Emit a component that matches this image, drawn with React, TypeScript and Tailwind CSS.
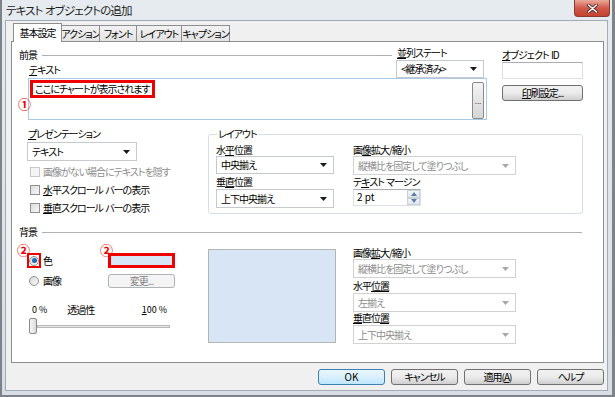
import React from "react";

function Arrow({ disabled }: { disabled?: boolean }) {
  return (
    <svg width="7" height="4" viewBox="0 0 7 4">
      <path d="M0 0h7L3.5 4z" fill={disabled ? "#a8a8a8" : "#1a1a1a"} />
    </svg>
  );
}

function Combo({ text, className = "", disabled }: { text: string; className?: string; disabled?: boolean }) {
  return (
    <div
      className={`flex items-center justify-between border bg-white pl-[4px] pr-[6px] ${
        disabled ? "border-[#d2d2d2] text-[#8d8d8d]" : "border-[#c5cad0] text-black"
      } ${className}`}
    >
      <span>{text}</span>
      <Arrow disabled={disabled} />
    </div>
  );
}

function U({ children }: { children: React.ReactNode }) {
  return <span className="underline underline-offset-[1px]">{children}</span>;
}

// a space that keeps its width despite the tight tracking
function Sp() {
  return <span className="tracking-normal"> </span>;
}

function Check({ children, disabled }: { children: React.ReactNode; disabled?: boolean }) {
  return (
    <div className={`flex h-[18px] items-center pl-[2px] ${disabled ? "text-[#8d8d8d]" : "text-black"}`}>
      <div
        className={`mr-[3px] h-[10px] w-[10px] border ${
          disabled ? "border-[#c8c8c8] bg-[#f4f4f4]" : "border-[#8f8f8f] bg-gradient-to-br from-[#dcdcdc] to-[#f7f7f7]"
        }`}
      />
      <span>{children}</span>
    </div>
  );
}

function Btn({ children, className = "", disabled, def }: { children: React.ReactNode; className?: string; disabled?: boolean; def?: boolean }) {
  return (
    <div
      className={`flex items-center justify-center rounded-[3px] border ${
        disabled
          ? "border-[#adb2b5] bg-[#f4f4f4] text-[#838383]"
          : def
          ? "border-[#3c7fb1] bg-gradient-to-b from-[#eaf6fd] via-[#d9f0fc] to-[#bee6fd] text-black"
          : "border-[#707070] bg-gradient-to-b from-[#f2f2f2] via-[#ebebeb] to-[#cfcfcf] text-black"
      } ${className}`}
    >
      {children}
    </div>
  );
}

function Radio({ on }: { on?: boolean }) {
  return (
    <div className="flex h-[10px] w-[10px] items-center justify-center rounded-full border border-[#8f8f8f] bg-gradient-to-br from-[#d8d8d8] to-[#f8f8f8]">
      {on && <div className="h-[5px] w-[5px] rounded-full bg-[#1d6bb8]" />}
    </div>
  );
}

function Mark({ n, className }: { n: string; className: string }) {
  return <span className={`absolute text-[13px] font-bold leading-none tracking-normal text-[#ee0000] ${className}`}>{n}</span>;
}

export default function App() {
  return (
    <div className="flex h-[397px] w-[615px] flex-col overflow-hidden whitespace-nowrap border-b-[2px] border-l-[2px] border-r-[3px] border-[#7e8389] bg-gradient-to-b from-[#e6ebf0] to-[#d8dee5] pb-[4px] pl-[3px] pr-[4px] font-['Noto_Sans_CJK_JP','Noto_Sans',sans-serif] text-[10px] leading-[12px] tracking-[-1px] text-black [font-feature-settings:'palt']">
      {/* title bar */}
      <div className="flex h-[20px] shrink-0 items-start">
        <span className="mt-[4px] pl-[1px] text-[11.5px] leading-[13px] tracking-[-0.9px] text-[#1e1e1e]">
          テキスト<Sp />オブジェクトの追加
        </span>
        <div className="flex-1" />
        <div className="-mr-[2px] flex h-[17px] w-[36px] items-center justify-center rounded-b-[4px] border border-t-0 border-[#8a3a32] bg-gradient-to-b from-[#e9a99a] via-[#d0594a] to-[#c4422f]">
          <svg width="11" height="9" viewBox="0 0 11 9">
            <path d="M1.5 1l8 7M9.5 1l-8 7" stroke="#3a2020" strokeWidth="3" strokeLinecap="round" />
            <path d="M1.5 1l8 7M9.5 1l-8 7" stroke="#ffffff" strokeWidth="1.6" strokeLinecap="round" />
          </svg>
        </div>
      </div>

      {/* client */}
      <div className="flex flex-1 flex-col border border-[#a3acb6] bg-[#f0f0f0] pl-[5px] pr-[2px] pt-[2px]">
        {/* tabs */}
        <div className="flex h-[18px] items-end pl-[2px]">
          <div className="relative z-10 -mb-[1px] flex h-[19px] w-[49px] items-center justify-center border border-b-0 border-[#8c8e94] bg-white">基本設定</div>
          {[
            ["アクション", "w-[39px]"],
            ["フォント", "w-[38px]"],
            ["レイアウト", "w-[46px]"],
            ["キャプション", "w-[49px]"],
          ].map(([t, w]) => (
            <div
              key={t}
              className={`-ml-[1px] flex h-[16px] items-center justify-center border border-b-0 border-[#8c8e94] bg-gradient-to-b from-[#f2f2f2] to-[#e3e3e3] ${w}`}
            >
              {t}
            </div>
          ))}
        </div>

        {/* panel */}
        <div className="flex h-[322px] w-[593px] flex-col border border-[#8c8e94] bg-white pl-[6px] pr-[20px] pt-[5px]">
          {/* 前景 */}
          <div className="flex items-start">
            <div className="flex w-[469px] flex-col">
              <div className="flex h-[31px]">
                <div className="flex flex-1 flex-col">
                  <div className="mt-[2px] flex h-[12px] items-center">
                    <span className="pl-[1px]">前景</span>
                    <div className="ml-[5px] mr-[4px] h-px flex-1 bg-[#b0b0b0]" />
                  </div>
                  <div className="mt-[3px] h-[12px] pl-[11px]">
                    <U>テ</U>キスト
                  </div>
                </div>
                <div className="mr-[3px] flex w-[88px] flex-col">
                  <div className="h-[13px] pl-px">
                    <U>並</U>列ステート
                  </div>
                  <Combo text="<継承済み>" className="h-[18px]" />
                </div>
              </div>
              <div className="relative ml-[10px] flex h-[42px] justify-between border border-[#a9cbe6] bg-white pl-[1px] pt-[1px]">
                <div className="flex h-[18px] items-center self-start border-[3px] border-[#ee0000] px-[2px]">ここにチャートが表示されます</div>
                <div className="mr-[2px] mt-[2px] flex h-[37px] w-[12px] items-center justify-center rounded-[2px] border border-[#8a8a8a] bg-gradient-to-b from-[#f4f4f4] to-[#d6d6d6] text-[8px] leading-none tracking-normal text-[#444]">
                  ...
                </div>
                <Mark n="①" className="-left-[11px] top-[18px]" />
              </div>
            </div>
            <div className="ml-[15px] flex w-[81px] flex-col">
              <div className="mt-[2px] h-[12px]">
                <U>オ</U>ブジェクト<Sp />ID
              </div>
              <div className="mt-[1px] h-[17px] border border-[#dbdfe6] border-t-[#abadb3] bg-white" />
              <Btn className="mt-[6px] h-[16px]">
                <U>印</U>刷設定...
              </Btn>
            </div>
          </div>

          {/* プレゼンテーション / レイアウト */}
          <div className="mt-[8px] flex items-start">
            <div className="ml-[10px] flex w-[170px] flex-col">
              <div className="h-[12px]">
                <U>プ</U>レゼンテーション
              </div>
              <Combo text="テキスト" className="-ml-px mt-[2px] h-[19px] w-[110px]" />
              <div className="mt-[2px]">
                <Check disabled>画像がない場合にテキストを隠す</Check>
                <Check>
                  <U>水</U>平スクロール<Sp />バーの表示
                </Check>
                <Check>
                  <U>垂</U>直スクロール<Sp />バーの表示
                </Check>
              </div>
            </div>
            <fieldset className="ml-[10px] flex h-[86px] w-[375px] rounded-[3px] border border-[#d5dfe5] pl-[7px]">
              <legend className="ml-[1px] px-[1px] leading-[12px]">レイアウト</legend>
              <div className="flex">
                <div className="flex w-[118px] flex-col">
                  <div className="mt-[4px] h-[12px]">
                    水<U>平</U>位置
                  </div>
                  <Combo text="中央揃え" className="h-[18px]" />
                  <div className="mt-[2px] h-[12px]">
                    垂<U>直</U>位置
                  </div>
                  <Combo text="上下中央揃え" className="mt-[1px] h-[19px]" />
                </div>
                <div className="ml-[19px] flex w-[163px] flex-col">
                  <div className="mt-[4px] h-[12px]">
                    画<U>像</U>拡大/縮小
                  </div>
                  <Combo disabled text="縦横比を固定して塗りつぶし" className="h-[19px]" />
                  <div className="mt-[1px] h-[12px]">
                    テ<U>キ</U>スト<Sp />マージン
                  </div>
                  <div className="mt-[1px] flex h-[17px] w-[68px] justify-between border border-[#dbdfe6] border-t-[#abadb3] bg-white pl-[3px]">
                    <span className="pt-[1px] tracking-normal">2 pt</span>
                    <div className="flex w-[13px] flex-col">
                      {["M0 4L3 0l3 4z", "M0 0h6L3 4z"].map((d) => (
                        <div key={d} className="flex flex-1 items-center justify-center border border-[#c9d1d9] bg-gradient-to-b from-[#f3f6f9] to-[#dfe6ed]">
                          <svg width="6" height="4" viewBox="0 0 6 4">
                            <path d={d} fill="#5a7ea6" />
                          </svg>
                        </div>
                      ))}
                    </div>
                  </div>
                </div>
              </div>
            </fieldset>
          </div>

          {/* 背景 */}
          <div className="mt-[9px] flex h-[12px] items-center">
            <span className="pl-[1px]">背景</span>
            <div className="ml-[5px] mr-px h-px flex-1 bg-[#b0b0b0]" />
          </div>

          <div className="flex items-start">
            <div className="ml-[9px] flex w-[148px] flex-col">
              <div className="relative mt-[15px] flex h-[15px] items-center">
                <div className="flex h-[15px] w-[14px] items-center justify-center border-[2px] border-[#ee0000]">
                  <Radio on />
                </div>
                <span className="ml-[2px]">色</span>
                <div className="ml-auto h-[15px] w-[67px] border-[3px] border-[#ee0000] bg-[#d7e6f6]" />
                <Mark n="②" className="-left-[10px] -top-[10px]" />
                <Mark n="②" className="left-[73px] -top-[10px]" />
              </div>
              <div className="mt-[6px] flex h-[14px] items-center">
                <div className="ml-[2px]">
                  <Radio />
                </div>
                <span className="ml-[4px]">画像</span>
                <Btn disabled className="ml-auto h-[14px] w-[67px]">
                  変更...
                </Btn>
              </div>
              <div className="mt-[16px] flex h-[12px] items-center pl-[5px] pr-[8px] text-[9px] tracking-normal">
                <span>0 %</span>
                <span className="ml-[20px] text-[10px] tracking-[-1px]">透過性</span>
                <span className="ml-auto">
                  <U>1</U>00 %
                </span>
              </div>
              <div className="mt-[2px] flex h-[16px] items-center pl-[2px] pr-[5px]">
                <div className="h-[16px] w-[8px] rounded-[2px] border border-[#8a8a8a] bg-gradient-to-r from-[#f6f6f6] to-[#dadada]" />
                <div className="h-[3px] flex-1 border border-[#b8b8b8] bg-[#e7eaea]" />
              </div>
            </div>
            <div className="ml-[33px] mt-[11px] h-[94px] w-[128px] border border-[#b4b4b4] bg-[#d7e5f5]" />
            <div className="ml-[17px] flex w-[163px] flex-col">
              <div className="mt-[9px] h-[12px]">
                画像<U>拡</U>大/縮小
              </div>
              <Combo disabled text="縦横比を固定して塗りつぶし" className="h-[19px]" />
              <div className="mt-[2px] h-[12px]">
                水平<U>位置</U>
              </div>
              <Combo disabled text="左揃え" className="mt-[1px] h-[19px]" />
              <div className="h-[12px]">
                <U>垂</U>直位<U>置</U>
              </div>
              <Combo disabled text="上下中央揃え" className="mt-[1px] h-[19px]" />
            </div>
          </div>
        </div>

        {/* buttons */}
        <div className="mt-[6px] flex w-[593px] justify-end gap-[6px]">
          <Btn def className="h-[16px] w-[67px] tracking-normal">OK</Btn>
          <Btn className="h-[16px] w-[67px]">キャンセル</Btn>
          <Btn className="h-[16px] w-[67px]">
            適用(<U>A</U>)
          </Btn>
          <Btn className="h-[16px] w-[67px]">ヘルプ</Btn>
        </div>
      </div>
    </div>
  );
}
